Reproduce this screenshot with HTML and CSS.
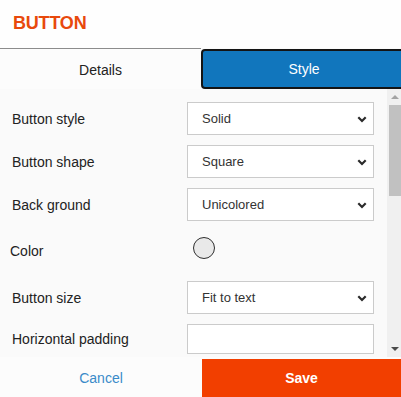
FILE: index.html
```html
<!DOCTYPE html>
<html lang="en">
<head>
<meta charset="utf-8">
<title>Button</title>
<link rel="stylesheet" href="styles.css">
</head>
<body>
<div class="panel">
  <header class="header"><h1 class="title">BUTTON</h1></header>
  <nav class="tabs">
    <div class="tab tab-details">Details</div>
    <div class="tab tab-style">Style</div>
  </nav>
  <main class="content">
    <div class="form">
      <div class="row">
        <span class="label">Button style</span>
        <div class="select"><span>Solid</span><svg class="chev" viewBox="0 0 10 7" width="10" height="7"><path d="M1.3 1.3 L5 5 L8.7 1.3"/></svg></div>
      </div>
      <div class="row">
        <span class="label">Button shape</span>
        <div class="select"><span>Square</span><svg class="chev" viewBox="0 0 10 7" width="10" height="7"><path d="M1.3 1.3 L5 5 L8.7 1.3"/></svg></div>
      </div>
      <div class="row">
        <span class="label">Back ground</span>
        <div class="select"><span>Unicolored</span><svg class="chev" viewBox="0 0 10 7" width="10" height="7"><path d="M1.3 1.3 L5 5 L8.7 1.3"/></svg></div>
      </div>
      <div class="row row-color">
        <span class="label label-color">Color</span>
        <div class="swatch"></div>
      </div>
      <div class="row">
        <span class="label">Button size</span>
        <div class="select"><span>Fit to text</span><svg class="chev" viewBox="0 0 10 7" width="10" height="7"><path d="M1.3 1.3 L5 5 L8.7 1.3"/></svg></div>
      </div>
      <div class="row row-input">
        <span class="label">Horizontal padding</span>
        <div class="input"></div>
      </div>
    </div>
    <div class="scrollbar">
      <div class="sb-btn"><span class="tri-up"></span></div>
      <div class="sb-thumb"></div>
      <div class="sb-track"></div>
      <div class="sb-btn"><span class="tri-down"></span></div>
    </div>
  </main>
  <footer class="footer">
    <div class="cancel">Cancel</div>
    <div class="save">Save</div>
  </footer>
</div>
</body>
</html>
```

FILE: styles.css
```css
* { box-sizing: border-box; }

html, body {
  margin: 0;
  padding: 0;
}

body {
  width: 401px;
  height: 397px;
  overflow: hidden;
  background: #fbfbfb;
  font-family: "Liberation Sans", Arial, sans-serif;
  color: #222;
}

.panel {
  display: flex;
  flex-direction: column;
  height: 397px;
}

.header {
  height: 48px;
  padding: 13px 13px 0;
  background: #fefefe;
}

.title {
  margin: 0;
  font-size: 18px;
  line-height: 20px;
  font-weight: bold;
  color: #e8490c;
  letter-spacing: -0.2px;
}

.tabs {
  display: grid;
  grid-template-columns: 201px 1fr;
  height: 41px;
  overflow: hidden;
}

.tab {
  display: flex;
  align-items: center;
  justify-content: center;
  font-size: 14px;
}

.tab-details {
  border-top: 1px solid #8c8c8c;
  background: #fcfcfc;
  color: #222;
  padding-top: 1px;
}

.tab-style {
  margin-top: 1px;
  margin-right: -6px;
  height: 40px;
  background: #1176bd;
  border: 2px solid #141414;
  border-radius: 4px;
  color: #fff;
}

.content {
  display: flex;
  height: 268px;
  background: #fafafa;
}

.form {
  flex: 1;
  overflow: hidden;
  padding: 13px 13px 0 12px;
  display: flex;
  flex-direction: column;
  gap: 10px;
}

.row {
  display: grid;
  grid-template-columns: 175px 187px;
  align-items: center;
  height: 33px;
  flex-shrink: 0;
}

.row-color {
  height: 40px;
}

.row-input {
  height: 30px;
}

.label {
  font-size: 14px;
  color: #222;
  white-space: nowrap;
}

.label-color {
  margin-left: -2px;
}

.select {
  height: 33px;
  display: flex;
  align-items: center;
  justify-content: space-between;
  padding: 0 6px 0 14px;
  background: #fff;
  border: 1px solid #cbcbcb;
  font-size: 13px;
  color: #333;
}

.chev {
  fill: none;
  stroke: #2a2a2a;
  stroke-width: 2.2;
  margin-top: 1px;
}

.input {
  height: 30px;
  background: #fff;
  border: 1px solid #cbcbcb;
}

.swatch {
  align-self: start;
  margin: 6px 0 0 6px;
  width: 22px;
  height: 22px;
  border-radius: 50%;
  border: 1.5px solid #2e2e2e;
  background: #e9e9e9;
}

.scrollbar {
  width: 14px;
  flex-shrink: 0;
  display: flex;
  flex-direction: column;
  background: #f0f0f0;
}

.sb-btn {
  height: 16px;
  display: flex;
  align-items: center;
  justify-content: center;
  padding-left: 2px;
}

.tri-up {
  width: 0;
  height: 0;
  border-left: 4px solid transparent;
  border-right: 4px solid transparent;
  border-bottom: 4px solid #a3a3a3;
}

.tri-down {
  width: 0;
  height: 0;
  border-left: 4px solid transparent;
  border-right: 4px solid transparent;
  border-top: 4px solid #4a4a4a;
}

.sb-thumb {
  height: 91px;
  margin-left: 2px;
  background: #c1c1c1;
}

.sb-track {
  flex: 1;
}

.footer {
  display: grid;
  grid-template-columns: 202px 1fr;
  height: 40px;
  background: #fcfcfc;
}

.cancel {
  display: flex;
  align-items: center;
  justify-content: center;
  padding-top: 2px;
  font-size: 14px;
  color: #3a8bc9;
}

.save {
  margin-top: 2px;
  display: flex;
  align-items: center;
  justify-content: center;
  background: #f23f00;
  color: #fff;
  font-size: 14px;
  font-weight: bold;
}
```
